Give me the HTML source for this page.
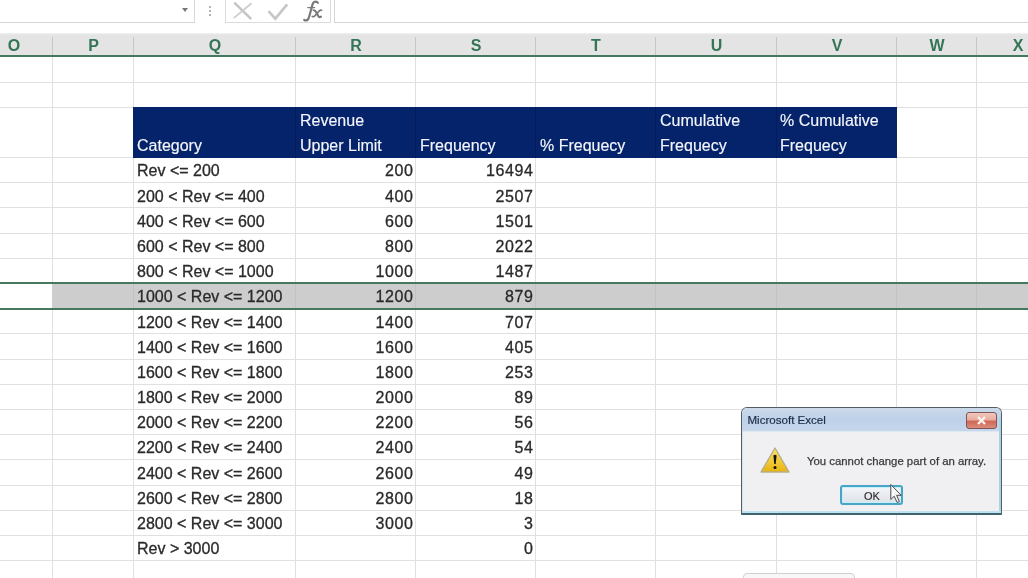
<!DOCTYPE html>
<html><head><meta charset="utf-8"><style>
*{margin:0;padding:0;box-sizing:border-box}
html,body{width:1028px;height:578px;overflow:hidden;background:#fff}
body{position:relative;will-change:transform;font-family:"Liberation Sans",sans-serif}
.a{position:absolute}
.t{position:absolute;font-size:16px;line-height:16px;white-space:nowrap;color:#2a2a2a;-webkit-text-stroke:0.3px #2a2a2a}
.r{text-align:right}
.n{letter-spacing:0.6px}
.w{color:#f4f6fb;-webkit-text-stroke:0.15px #f4f6fb}
.ch{position:absolute;top:38px;font-size:16px;line-height:16px;font-weight:bold;color:#337556;text-align:center}
</style></head><body>

<div class="a" style="left:0;top:0;width:195px;height:23px;border-right:1px solid #d6d6d6;border-bottom:1px solid #d6d6d6"></div>
<div class="a" style="left:182px;top:8px;width:0;height:0;border-left:3.5px solid transparent;border-right:3.5px solid transparent;border-top:4px solid #777"></div>
<div class="a" style="left:209px;top:6px;width:2px;height:2px;background:#b4b4b4"></div>
<div class="a" style="left:209px;top:10px;width:2px;height:2px;background:#b4b4b4"></div>
<div class="a" style="left:209px;top:14px;width:2px;height:2px;background:#b4b4b4"></div>
<div class="a" style="left:225px;top:-1px;width:106px;height:24px;border:1px solid #dcdcdc;border-top:none"></div>
<div class="a" style="left:334px;top:-1px;width:700px;height:24px;border-left:1px solid #d6d6d6;border-bottom:1px solid #d6d6d6"></div>
<svg class="a" style="left:232px;top:2px" width="22" height="19" viewBox="0 0 22 19"><path d="M3 1.3 L18.5 16.3" stroke="#c4c4c4" stroke-width="2.5" fill="none" stroke-linecap="round"/><path d="M19 1.8 L2.3 15.6" stroke="#cdcdcd" stroke-width="1.8" fill="none" stroke-linecap="round"/></svg>
<svg class="a" style="left:267px;top:3px" width="22" height="18" viewBox="0 0 22 18"><path d="M1.5 8.2 L8.3 15.7 L20.2 1.4" stroke="#c6c6c6" stroke-width="2.6" fill="none"/></svg>
<svg class="a" style="left:300px;top:0px" width="26" height="23" viewBox="0 0 26 23"><g fill="none" stroke="#7a7a7a" stroke-linecap="round"><path d="M17.8 2.8 C17 1.2 14.4 1 13.1 3.1 C12 5 9.8 15.5 8.5 18.5 C7.6 20.6 5.6 21 4.2 19.8" stroke-width="2.2"/><path d="M7.8 7.6 L14.6 7.6" stroke-width="1.4"/><path d="M13.6 10.2 C15 10 15.6 11 16.5 12.8 L18.4 16.2 C19 17.4 20 17.4 21 16.6" stroke-width="2.1"/><path d="M21.6 10.3 C20.6 9.8 19.8 10.4 18.8 11.4 L14.8 15.9 C13.8 17 12.8 17 12.2 16.4" stroke-width="1.6"/></g></svg>
<div class="a" style="left:0;top:33px;width:1028px;height:22px;background:linear-gradient(#f2f2f2,#e4e4e4 2px)"></div>
<div class="a" style="left:0;top:55px;width:1028px;height:2px;background:#437a5f"></div>
<div class="a" style="left:52px;top:37px;width:1px;height:18px;background:#c6c6c6"></div>
<div class="a" style="left:133px;top:37px;width:1px;height:18px;background:#c6c6c6"></div>
<div class="a" style="left:295px;top:37px;width:1px;height:18px;background:#c6c6c6"></div>
<div class="a" style="left:415px;top:37px;width:1px;height:18px;background:#c6c6c6"></div>
<div class="a" style="left:535px;top:37px;width:1px;height:18px;background:#c6c6c6"></div>
<div class="a" style="left:655px;top:37px;width:1px;height:18px;background:#c6c6c6"></div>
<div class="a" style="left:776px;top:37px;width:1px;height:18px;background:#c6c6c6"></div>
<div class="a" style="left:896px;top:37px;width:1px;height:18px;background:#c6c6c6"></div>
<div class="a" style="left:976px;top:37px;width:1px;height:18px;background:#c6c6c6"></div>
<div class="ch" style="left:-25px;width:78px">O</div>
<div class="ch" style="left:53px;width:81px">P</div>
<div class="ch" style="left:134px;width:162px">Q</div>
<div class="ch" style="left:296px;width:120px">R</div>
<div class="ch" style="left:416px;width:120px">S</div>
<div class="ch" style="left:536px;width:120px">T</div>
<div class="ch" style="left:656px;width:121px">U</div>
<div class="ch" style="left:777px;width:120px">V</div>
<div class="ch" style="left:897px;width:80px">W</div>
<div class="ch" style="left:977px;width:82px">X</div>
<div class="a" style="left:52px;top:57px;width:1px;height:521px;background:#e0e0e0"></div>
<div class="a" style="left:133px;top:57px;width:1px;height:521px;background:#e0e0e0"></div>
<div class="a" style="left:295px;top:57px;width:1px;height:521px;background:#e0e0e0"></div>
<div class="a" style="left:415px;top:57px;width:1px;height:521px;background:#e0e0e0"></div>
<div class="a" style="left:535px;top:57px;width:1px;height:521px;background:#e0e0e0"></div>
<div class="a" style="left:655px;top:57px;width:1px;height:521px;background:#e0e0e0"></div>
<div class="a" style="left:776px;top:57px;width:1px;height:521px;background:#e0e0e0"></div>
<div class="a" style="left:896px;top:57px;width:1px;height:521px;background:#e0e0e0"></div>
<div class="a" style="left:976px;top:57px;width:1px;height:521px;background:#e0e0e0"></div>
<div class="a" style="left:0;top:82px;width:1028px;height:1px;background:#e0e0e0"></div>
<div class="a" style="left:0;top:107px;width:1028px;height:1px;background:#e0e0e0"></div>
<div class="a" style="left:0;top:157px;width:1028px;height:1px;background:#e0e0e0"></div>
<div class="a" style="left:0;top:182px;width:1028px;height:1px;background:#e0e0e0"></div>
<div class="a" style="left:0;top:207px;width:1028px;height:1px;background:#e0e0e0"></div>
<div class="a" style="left:0;top:233px;width:1028px;height:1px;background:#e0e0e0"></div>
<div class="a" style="left:0;top:258px;width:1028px;height:1px;background:#e0e0e0"></div>
<div class="a" style="left:0;top:283px;width:1028px;height:1px;background:#e0e0e0"></div>
<div class="a" style="left:0;top:308px;width:1028px;height:1px;background:#e0e0e0"></div>
<div class="a" style="left:0;top:333px;width:1028px;height:1px;background:#e0e0e0"></div>
<div class="a" style="left:0;top:359px;width:1028px;height:1px;background:#e0e0e0"></div>
<div class="a" style="left:0;top:384px;width:1028px;height:1px;background:#e0e0e0"></div>
<div class="a" style="left:0;top:409px;width:1028px;height:1px;background:#e0e0e0"></div>
<div class="a" style="left:0;top:434px;width:1028px;height:1px;background:#e0e0e0"></div>
<div class="a" style="left:0;top:459px;width:1028px;height:1px;background:#e0e0e0"></div>
<div class="a" style="left:0;top:485px;width:1028px;height:1px;background:#e0e0e0"></div>
<div class="a" style="left:0;top:510px;width:1028px;height:1px;background:#e0e0e0"></div>
<div class="a" style="left:0;top:535px;width:1028px;height:1px;background:#e0e0e0"></div>
<div class="a" style="left:0;top:560px;width:1028px;height:1px;background:#e0e0e0"></div>
<div class="a" style="left:133px;top:107px;width:764px;height:51px;background:#05236a"></div>
<div class="a" style="left:295px;top:107px;width:1px;height:51px;background:#061c58"></div>
<div class="a" style="left:415px;top:107px;width:1px;height:51px;background:#061c58"></div>
<div class="a" style="left:535px;top:107px;width:1px;height:51px;background:#061c58"></div>
<div class="a" style="left:655px;top:107px;width:1px;height:51px;background:#061c58"></div>
<div class="a" style="left:776px;top:107px;width:1px;height:51px;background:#061c58"></div>
<div class="a" style="left:52px;top:284px;width:976px;height:24px;background:#cdcdcd"></div>
<div class="a" style="left:133px;top:284px;width:1px;height:24px;background:#c2c2c2"></div>
<div class="a" style="left:295px;top:284px;width:1px;height:24px;background:#c2c2c2"></div>
<div class="a" style="left:415px;top:284px;width:1px;height:24px;background:#c2c2c2"></div>
<div class="a" style="left:535px;top:284px;width:1px;height:24px;background:#c2c2c2"></div>
<div class="a" style="left:655px;top:284px;width:1px;height:24px;background:#c2c2c2"></div>
<div class="a" style="left:776px;top:284px;width:1px;height:24px;background:#c2c2c2"></div>
<div class="a" style="left:896px;top:284px;width:1px;height:24px;background:#c2c2c2"></div>
<div class="a" style="left:976px;top:284px;width:1px;height:24px;background:#c2c2c2"></div>
<div class="a" style="left:0;top:282px;width:1028px;height:2px;background:#437a5f"></div>
<div class="a" style="left:0;top:308px;width:1028px;height:2px;background:#437a5f"></div>
<div class="t w" style="left:137px;top:138px">Category</div>
<div class="t w" style="left:300px;top:113px">Revenue</div>
<div class="t w" style="left:300px;top:138px">Upper Limit</div>
<div class="t w" style="left:420px;top:138px">Frequency</div>
<div class="t w" style="left:540px;top:138px">% Frequecy</div>
<div class="t w" style="left:660px;top:113px">Cumulative</div>
<div class="t w" style="left:660px;top:138px">Frequecy</div>
<div class="t w" style="left:780px;top:113px">% Cumulative</div>
<div class="t w" style="left:780px;top:138px">Frequecy</div>
<div class="t" style="left:137px;top:163px">Rev &lt;= 200</div>
<div class="t n r" style="right:614.6px;top:163px">200</div>
<div class="t n r" style="right:494.6px;top:163px">16494</div>
<div class="t" style="left:137px;top:189px">200 &lt; Rev &lt;= 400</div>
<div class="t n r" style="right:614.6px;top:189px">400</div>
<div class="t n r" style="right:494.6px;top:189px">2507</div>
<div class="t" style="left:137px;top:214px">400 &lt; Rev &lt;= 600</div>
<div class="t n r" style="right:614.6px;top:214px">600</div>
<div class="t n r" style="right:494.6px;top:214px">1501</div>
<div class="t" style="left:137px;top:239px">600 &lt; Rev &lt;= 800</div>
<div class="t n r" style="right:614.6px;top:239px">800</div>
<div class="t n r" style="right:494.6px;top:239px">2022</div>
<div class="t" style="left:137px;top:264px">800 &lt; Rev &lt;= 1000</div>
<div class="t n r" style="right:614.6px;top:264px">1000</div>
<div class="t n r" style="right:494.6px;top:264px">1487</div>
<div class="t" style="left:137px;top:289px">1000 &lt; Rev &lt;= 1200</div>
<div class="t n r" style="right:614.6px;top:289px">1200</div>
<div class="t n r" style="right:494.6px;top:289px">879</div>
<div class="t" style="left:137px;top:315px">1200 &lt; Rev &lt;= 1400</div>
<div class="t n r" style="right:614.6px;top:315px">1400</div>
<div class="t n r" style="right:494.6px;top:315px">707</div>
<div class="t" style="left:137px;top:340px">1400 &lt; Rev &lt;= 1600</div>
<div class="t n r" style="right:614.6px;top:340px">1600</div>
<div class="t n r" style="right:494.6px;top:340px">405</div>
<div class="t" style="left:137px;top:365px">1600 &lt; Rev &lt;= 1800</div>
<div class="t n r" style="right:614.6px;top:365px">1800</div>
<div class="t n r" style="right:494.6px;top:365px">253</div>
<div class="t" style="left:137px;top:390px">1800 &lt; Rev &lt;= 2000</div>
<div class="t n r" style="right:614.6px;top:390px">2000</div>
<div class="t n r" style="right:494.6px;top:390px">89</div>
<div class="t" style="left:137px;top:415px">2000 &lt; Rev &lt;= 2200</div>
<div class="t n r" style="right:614.6px;top:415px">2200</div>
<div class="t n r" style="right:494.6px;top:415px">56</div>
<div class="t" style="left:137px;top:440px">2200 &lt; Rev &lt;= 2400</div>
<div class="t n r" style="right:614.6px;top:440px">2400</div>
<div class="t n r" style="right:494.6px;top:440px">54</div>
<div class="t" style="left:137px;top:466px">2400 &lt; Rev &lt;= 2600</div>
<div class="t n r" style="right:614.6px;top:466px">2600</div>
<div class="t n r" style="right:494.6px;top:466px">49</div>
<div class="t" style="left:137px;top:491px">2600 &lt; Rev &lt;= 2800</div>
<div class="t n r" style="right:614.6px;top:491px">2800</div>
<div class="t n r" style="right:494.6px;top:491px">18</div>
<div class="t" style="left:137px;top:516px">2800 &lt; Rev &lt;= 3000</div>
<div class="t n r" style="right:614.6px;top:516px">3000</div>
<div class="t n r" style="right:494.6px;top:516px">3</div>
<div class="t" style="left:137px;top:541px">Rev &gt; 3000</div>
<div class="t n r" style="right:494.6px;top:541px">0</div>
<div class="a" style="left:743px;top:573px;width:112px;height:12px;border:1px solid #d0d0d0;border-radius:4px;background:#f7f7f7"></div>
<div class="a" style="left:741px;top:407px;width:261px;height:108px;border:1px solid #545c66;border-bottom:2px solid #3f6470;border-radius:6px 6px 1px 1px;background:#f0f0f2;overflow:hidden">
<div class="a" style="left:0;top:0;width:259px;height:23px;background:linear-gradient(#cbd9ea,#bed1e8 50%,#c6d7ec)"></div>
<div class="a" style="left:0;top:23px;width:259px;height:1px;background:#dfe7f0"></div>
<div class="a" style="left:0;top:23px;width:1px;height:84px;background:#d8e2ec"></div>
<div class="a" style="left:257px;top:10px;width:2px;height:94px;background:#a9d3e6"></div>
<div class="a" style="left:0;top:103px;width:259px;height:2px;background:#bfe3ee"></div>
</div>
<div class="a" style="left:747.5px;top:413px;font-size:11.55px;line-height:14px;color:#1c2c44;white-space:nowrap;-webkit-text-stroke:0.2px #1c2c44">Microsoft Excel</div>
<div class="a" style="left:966px;top:412px;width:31px;height:17px;border:1px solid #7e5656;border-radius:3px;background:linear-gradient(#f2c8be 0%,#e9ad9f 44%,#d06856 57%,#dc8c7b 100%)"></div>
<svg class="a" style="left:974px;top:414px" width="15" height="13" viewBox="0 0 15 13"><path d="M4 3 L11 10 M11 3 L4 10" stroke="#fbf4f2" stroke-width="2.4" fill="none"/></svg>
<svg class="a" style="left:759px;top:446px" width="32" height="28" viewBox="0 0 32 28"><defs><linearGradient id="wg" x1="0" y1="0" x2="0" y2="1"><stop offset="0" stop-color="#fbe46a"/><stop offset="1" stop-color="#e8b410"/></linearGradient></defs><path d="M16 2 L30 26 L2 26 Z" fill="url(#wg)" stroke="#b8ad88" stroke-width="1.4" stroke-linejoin="round"/><path d="M14.4 9.5 Q16 7.8 17.6 9.5 L16.7 18 L15.3 18 Z" fill="#141414"/><circle cx="16" cy="21.6" r="1.5" fill="#141414"/></svg>
<div class="a" style="left:807px;top:454px;font-size:11.35px;line-height:14px;color:#3a3a3a;white-space:nowrap;-webkit-text-stroke:0.25px #3a3a3a">You cannot change part of an array.</div>
<div class="a" style="left:840px;top:485px;width:63px;height:20px;border:2px solid #4aa4c8;border-radius:3px;background:linear-gradient(#f4f6f9,#e8ebf0 50%,#dde2e9);box-shadow:inset 0 0 0 1px #c4f2fb"></div>
<div class="a" style="left:864px;top:489px;font-size:11px;line-height:14px;color:#333;-webkit-text-stroke:0.2px #333">OK</div>
<svg class="a" style="left:889px;top:483px" width="16" height="22" viewBox="0 0 16 22"><path d="M1.8 1.5 L1.8 16.5 L5.2 13.2 L8.2 19.5 L10.4 18.6 L7.6 12.3 L12.2 12.3 Z" fill="#fafafa" stroke="#4a4a4a" stroke-width="1" stroke-linejoin="round"/></svg>

</body></html>
